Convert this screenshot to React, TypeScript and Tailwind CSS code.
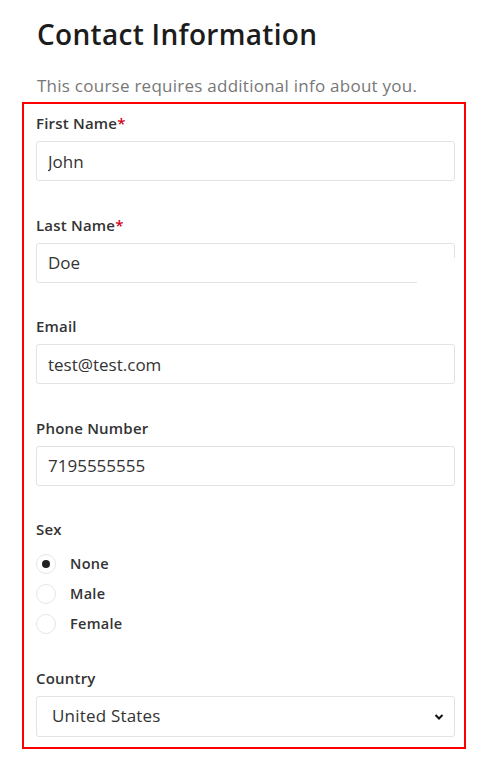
import React from "react";

const font = { fontFamily: '"Open Sans", "Liberation Sans", sans-serif' };

function Label({ text, required, extra }: { text: string; required?: boolean; extra?: string }) {
  return (
    <label className={`block text-[15px] leading-[18px] font-semibold tracking-[0.2px] text-[#333] ${extra ?? "mb-[9px]"}`}>
      {text}
      {required && <span className="text-[#d0021b]">*</span>}
    </label>
  );
}

function Field({ label, value, required, clipped }: { label: string; value: string; required?: boolean; clipped?: boolean }) {
  return (
    <div className="mb-[34.5px]">
      <Label text={label} required={required} />
      <div className="relative">
        <input
          readOnly
          value={value}
          className="w-full h-[40px] px-[11px] border border-[#e3e3e3] rounded-[3px] text-[17px] text-[#333] outline-none bg-white"
        />
        {clipped && <div className="absolute right-0 bottom-0 w-[38px] h-[25px] bg-white" />}
      </div>
    </div>
  );
}

export default function App() {
  const sexes = ["None", "Male", "Female"];

  return (
    <div className="min-h-screen bg-white pl-[22px] pt-[14px]" style={font}>
      <h1 className="ml-[15px] text-[28px] leading-[40px] font-semibold tracking-[0.3px] text-[#1c1c1c]">Contact Information</h1>
      <p className="ml-[15px] mt-[20px] text-[17px] leading-[24px] tracking-[0.25px] text-[#777]">
        This course requires additional info about you.
      </p>

      <div className="w-[444px] mt-[4px] border-2 border-[#ff0000] pl-[12px] pr-[9px] pt-[10px] pb-[10px]">
        <Field label="First Name" value="John" required />
        <Field label="Last Name" value="Doe" required clipped />
        <Field label="Email" value="test@test.com" />
        <Field label="Phone Number" value="7195555555" />

        <div className="mb-[34.5px]">
          <Label text="Sex" />
          <div className="flex flex-col gap-[10px] pt-[7px]">
            {sexes.map((s, i) => (
              <div key={s} className="flex items-center h-[20px]">
                <span className="w-[20px] h-[20px] rounded-full border border-[#e6e6e6] flex items-center justify-center bg-white">
                  {i === 0 && <span className="w-[8px] h-[8px] rounded-full bg-[#222]" />}
                </span>
                <span className="ml-[14px] text-[14.5px] font-semibold tracking-[0.3px] text-[#333]">{s}</span>
              </div>
            ))}
          </div>
        </div>

        <div>
          <Label text="Country" extra="mb-[9px]" />
          <div className="relative h-[41px] border border-[#e3e3e3] rounded-[3px] flex items-center pl-[15px]">
            <span className="text-[17px] tracking-[0.2px] text-[#333]">United States</span>
            <svg className="absolute right-[10px] top-[16px]" width="10" height="8" viewBox="0 0 10 8">
              <path d="M1.5 2 L5 5.5 L8.5 2" fill="none" stroke="#111" strokeWidth="2" />
            </svg>
          </div>
        </div>
      </div>
    </div>
  );
}
